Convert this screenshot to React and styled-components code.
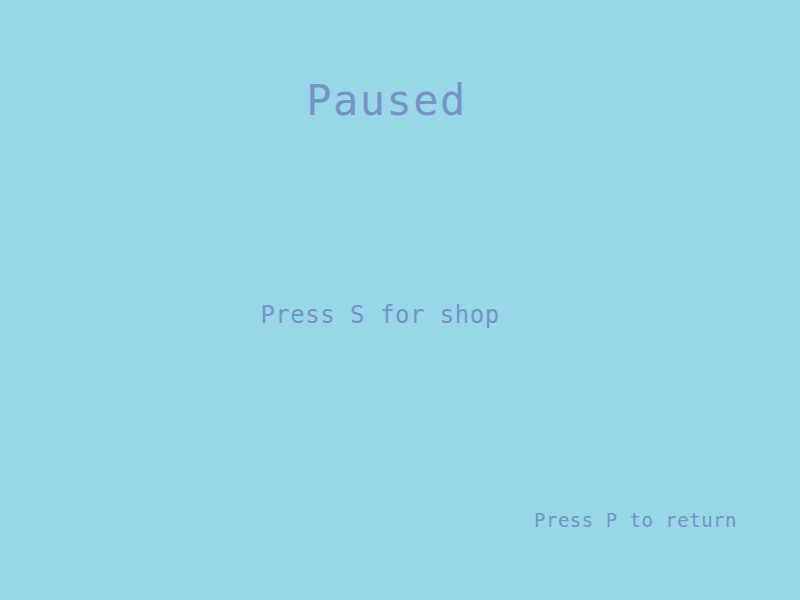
import React from 'react';
import styled, {createGlobalStyle} from "styled-components";

const GlobalStyle = createGlobalStyle`
    html, body {
        margin: 0;
        padding: 0;
        background-color: #97d7e8;
    }
`;

const Screen = styled.div`
    width: 100%;
    height: 100vh;
    display: flex;
    flex-direction: column;
    background-color: #97d7e8;
    color: #7594c4;
    font-family: "DejaVu Sans Mono", "Liberation Mono", monospace;
    overflow: hidden;
`;

const Title = styled.h1`
    margin: 75px 0 0 0;
    padding-right: 27px;
    text-align: center;
    font-size: 42px;
    font-weight: normal;
    line-height: 52px;
    letter-spacing: 1.5px;
`;

const Middle = styled.div`
    flex: 1;
    display: flex;
    align-items: center;
    justify-content: center;
    padding-right: 40px;
    padding-bottom: 5px;
`;

const Hint = styled.p`
    margin: 0;
    font-size: ${props => props.small ? "19px" : "24px"};
    letter-spacing: 0.5px;
    line-height: 1.2;
`;

const Footer = styled.div`
    display: flex;
    justify-content: flex-end;
    padding: 0 63px 68px 0;
`;

const App = () => {
    return (
        <>
            <GlobalStyle/>
            <Screen>
                <Title>Paused</Title>
                <Middle>
                    <Hint>Press S for shop</Hint>
                </Middle>
                <Footer>
                    <Hint small>Press P to return</Hint>
                </Footer>
            </Screen>
        </>
    );
};

export default App;
